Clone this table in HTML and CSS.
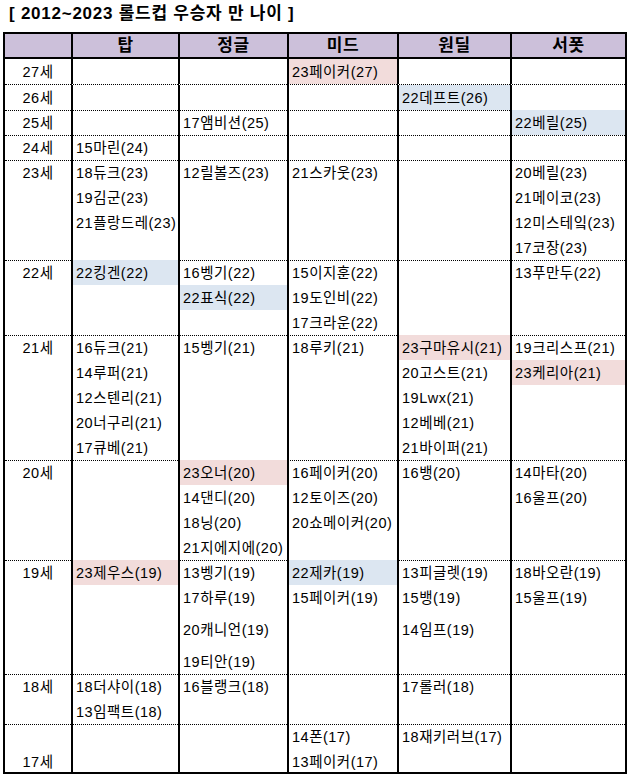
FILE: index.html
```html
<!DOCTYPE html>
<html lang="ko">
<head>
<meta charset="utf-8">
<title>2012~2023 롤드컵 우승자 만 나이</title>
<link rel="stylesheet" href="styles.css">
</head>
<body>
<div class="page">
  <div class="title">[ 2012~2023 롤드컵 우승자 만 나이 ]</div>
  <div class="sheet">
    <div class="row head">
      <div class="cell"></div>
      <div class="cell">탑</div>
      <div class="cell">정글</div>
      <div class="cell">미드</div>
      <div class="cell">원딜</div>
      <div class="cell">서폿</div>
    </div>

    <div class="row first">
      <div class="cell age"><div class="line">27세</div></div>
      <div class="cell"></div>
      <div class="cell"></div>
      <div class="cell"><div class="line pink">23페이커(27)</div></div>
      <div class="cell"></div>
      <div class="cell"></div>
    </div>

    <div class="row r1">
      <div class="cell age"><div class="line">26세</div></div>
      <div class="cell"></div>
      <div class="cell"></div>
      <div class="cell"></div>
      <div class="cell"><div class="line blue">22데프트(26)</div></div>
      <div class="cell"></div>
    </div>

    <div class="row r1">
      <div class="cell age"><div class="line">25세</div></div>
      <div class="cell"></div>
      <div class="cell"><div class="line">17앰비션(25)</div></div>
      <div class="cell"></div>
      <div class="cell"></div>
      <div class="cell"><div class="line blue">22베릴(25)</div></div>
    </div>

    <div class="row r1">
      <div class="cell age"><div class="line">24세</div></div>
      <div class="cell"><div class="line">15마린(24)</div></div>
      <div class="cell"></div>
      <div class="cell"></div>
      <div class="cell"></div>
      <div class="cell"></div>
    </div>

    <div class="row r4">
      <div class="cell age"><div class="line">23세</div></div>
      <div class="cell">
        <div class="line">18듀크(23)</div>
        <div class="line">19김군(23)</div>
        <div class="line">21플랑드레(23)</div>
      </div>
      <div class="cell"><div class="line">12릴볼즈(23)</div></div>
      <div class="cell"><div class="line">21스카웃(23)</div></div>
      <div class="cell"></div>
      <div class="cell">
        <div class="line">20베릴(23)</div>
        <div class="line">21메이코(23)</div>
        <div class="line">12미스테잌(23)</div>
        <div class="line">17코장(23)</div>
      </div>
    </div>

    <div class="row r3">
      <div class="cell age"><div class="line">22세</div></div>
      <div class="cell"><div class="line blue">22킹겐(22)</div></div>
      <div class="cell">
        <div class="line">16벵기(22)</div>
        <div class="line blue">22표식(22)</div>
      </div>
      <div class="cell">
        <div class="line">15이지훈(22)</div>
        <div class="line">19도인비(22)</div>
        <div class="line">17크라운(22)</div>
      </div>
      <div class="cell"></div>
      <div class="cell"><div class="line">13푸만두(22)</div></div>
    </div>

    <div class="row r5">
      <div class="cell age"><div class="line">21세</div></div>
      <div class="cell">
        <div class="line">16듀크(21)</div>
        <div class="line">14루퍼(21)</div>
        <div class="line">12스텐리(21)</div>
        <div class="line">20너구리(21)</div>
        <div class="line">17큐베(21)</div>
      </div>
      <div class="cell"><div class="line">15벵기(21)</div></div>
      <div class="cell"><div class="line">18루키(21)</div></div>
      <div class="cell">
        <div class="line pink">23구마유시(21)</div>
        <div class="line">20고스트(21)</div>
        <div class="line">19Lwx(21)</div>
        <div class="line">12베베(21)</div>
        <div class="line">21바이퍼(21)</div>
      </div>
      <div class="cell">
        <div class="line">19크리스프(21)</div>
        <div class="line pink">23케리아(21)</div>
      </div>
    </div>

    <div class="row r4">
      <div class="cell age"><div class="line">20세</div></div>
      <div class="cell"></div>
      <div class="cell">
        <div class="line pink">23오너(20)</div>
        <div class="line">14댄디(20)</div>
        <div class="line">18닝(20)</div>
        <div class="line">21지에지에(20)</div>
      </div>
      <div class="cell">
        <div class="line">16페이커(20)</div>
        <div class="line">12토이즈(20)</div>
        <div class="line">20쇼메이커(20)</div>
      </div>
      <div class="cell"><div class="line">16뱅(20)</div></div>
      <div class="cell">
        <div class="line">14마타(20)</div>
        <div class="line">16울프(20)</div>
      </div>
    </div>

    <div class="row r19">
      <div class="cell age"><div class="line">19세</div></div>
      <div class="cell"><div class="line pink">23제우스(19)</div></div>
      <div class="cell">
        <div class="line">13벵기(19)</div>
        <div class="line">17하루(19)</div>
        <div class="line tall">20캐니언(19)</div>
        <div class="line tall">19티안(19)</div>
      </div>
      <div class="cell">
        <div class="line blue">22제카(19)</div>
        <div class="line">15페이커(19)</div>
      </div>
      <div class="cell">
        <div class="line">13피글렛(19)</div>
        <div class="line">15뱅(19)</div>
        <div class="line tall">14임프(19)</div>
      </div>
      <div class="cell">
        <div class="line">18바오란(19)</div>
        <div class="line">15울프(19)</div>
      </div>
    </div>

    <div class="row r2">
      <div class="cell age"><div class="line">18세</div></div>
      <div class="cell">
        <div class="line">18더샤이(18)</div>
        <div class="line">13임팩트(18)</div>
      </div>
      <div class="cell"><div class="line">16블랭크(18)</div></div>
      <div class="cell"></div>
      <div class="cell"><div class="line">17롤러(18)</div></div>
      <div class="cell"></div>
    </div>

    <div class="row last">
      <div class="cell age">
        <div class="line"></div>
        <div class="line">17세</div>
      </div>
      <div class="cell"></div>
      <div class="cell"></div>
      <div class="cell">
        <div class="line">14폰(17)</div>
        <div class="line">13페이커(17)</div>
      </div>
      <div class="cell"><div class="line">18재키러브(17)</div></div>
      <div class="cell"></div>
    </div>
  </div>
</div>
</body>
</html>
```

FILE: styles.css
```css
* {
  box-sizing: border-box;
}

body {
  margin: 0;
  background: #ffffff;
  color: #000000;
  font-family: "Liberation Sans", "Noto Sans CJK KR", sans-serif;
}

.page {
  width: 632px;
  padding: 0 5px 0 3px;
}

.title {
  height: 32px;
  padding-left: 6px;
  font-size: 17px;
  font-weight: bold;
  line-height: 27px;
  letter-spacing: 0.75px;
  white-space: nowrap;
}

.sheet {
  width: 624px;
  border: 2px solid #000000;
}

.row {
  display: grid;
  grid-template-columns: 66px 107px 109px 110px 113px 115px;
}

.cell {
  border-left: 2px solid #000000;
  border-bottom: 1px dotted #000000;
  overflow-x: visible;
  overflow-y: clip;
  font-size: 14.5px;
  letter-spacing: 0.5px;
}

.cell:first-child {
  border-left: none;
}

.head {
  height: 25px;
  border-bottom: 2px solid #000000;
}

.head .cell {
  border-bottom: none;
  background: #ccc0da;
  font-size: 17px;
  font-weight: bold;
  line-height: 23px;
  letter-spacing: 0.5px;
  text-align: center;
}

.first { height: 26px; }
.r1 { height: 25px; }
.r2 { height: 50px; }
.r3 { height: 75px; }
.r4 { height: 100px; }
.r5 { height: 125px; }
.r19 { height: 114px; }

.last {
  height: 48px;
}

.last .cell {
  border-bottom: none;
}

.line {
  height: 25px;
  line-height: 27px;
  padding-left: 3px;
  white-space: nowrap;
}

.line.tall {
  height: 32px;
  padding-top: 7px;
}

.age .line {
  padding-left: 0;
  text-align: center;
}

.pink {
  background: #f2dcdb;
}

.blue {
  background: #dce6f1;
}
```
